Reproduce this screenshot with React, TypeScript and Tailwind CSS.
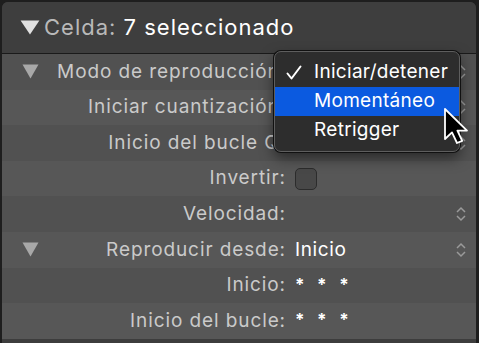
import React from 'react';

const font = { fontFamily: 'Inter, "Liberation Sans", Arial, sans-serif' };

const Chevrons = () => (
  <svg width="12" height="18" viewBox="0 0 12 18" className="shrink-0">
    <path d="M2 7 L6 3 L10 7 M2 11 L6 15 L10 11" stroke="#9a9a9a" strokeWidth="1.5" fill="none" />
  </svg>
);

const Tri = ({ color, w = 17 }: { color: string; w?: number }) => (
  <svg width={w} height="15" viewBox="0 0 17 15" preserveAspectRatio="none">
    <path d="M0.5 0.5 H16.5 L8.5 14.5 Z" fill={color} />
  </svg>
);

interface RowProps {
  label: string;
  light?: boolean;
  disclosure?: boolean;
  value?: React.ReactNode;
  stepper?: boolean;
}

const Row: React.FC<RowProps> = ({ label, light, disclosure, value, stepper }) => (
  <div className={`flex h-[35.6px] items-center ${light ? 'bg-[#575757]' : 'bg-[#515151]'}`}>
    <div className="w-[48px] pl-[20px] shrink-0">{disclosure && <Tri color="#a8a8a8" />}</div>
    <div className="w-[236px] text-right text-[19px] tracking-[0.9px] text-[#cacaca] whitespace-nowrap overflow-hidden">
      {label}
    </div>
    <div className="flex flex-1 items-center pl-[9px] pr-[9px]">
      <div className="flex-1 text-[19px] tracking-[0.6px] text-white">{value}</div>
      {stepper && <Chevrons />}
    </div>
  </div>
);

const Stars = () => (
  <span className="flex gap-[12px] font-bold text-[17px] text-white">
    <span>*</span>
    <span>*</span>
    <span>*</span>
  </span>
);

const Check = () => (
  <svg width="16" height="16" viewBox="0 0 16 16">
    <path d="M1.5 8.5 L5.5 13.5 L14.5 1.5" stroke="#fff" strokeWidth="2" fill="none" strokeLinecap="round" strokeLinejoin="round" />
  </svg>
);

export default function App() {
  return (
    <div className="w-[479px] h-[343px] bg-[#1e1e1e] overflow-hidden" style={font}>
      <div className="relative ml-[2px] mr-[3px] mt-[2px] h-[341px] rounded-t-[6px] overflow-hidden bg-[#3d3d3d]">
        <div className="flex h-[52px] items-center gap-[4px] pl-[18px] border-b border-[#1a1a1a] bg-[#3e3e3e]">
          <Tri color="#e0e0e0" w={20} />
          <span className="text-[22px] text-[#b9b9b9] tracking-[1px]">
            Celda: <span className="text-white">7 seleccionado</span>
          </span>
        </div>
        <Row label="Modo de reproducción:" disclosure stepper />
        <Row label="Iniciar cuantización:" light stepper />
        <Row label="Inicio del bucle Q:" stepper />
        <Row
          label="Invertir:"
          light
          value={<div className="w-[22px] h-[22px] rounded-[5px] bg-[#484848] border border-[#2c2c2c]" />}
        />
        <Row label="Velocidad:" stepper />
        <Row label="Reproducir desde:" light disclosure stepper value="Inicio" />
        <Row label="Inicio:" value={<Stars />} />
        <Row label="Inicio del bucle:" light value={<Stars />} />

        <div className="absolute left-[272px] top-[49px] w-[186px] rounded-[7px] border border-[#5e5e5e] bg-[#2d2d2d] py-[6px] shadow-[0_0_0_1px_#111,0_6px_14px_rgba(0,0,0,0.5)] text-[19px] tracking-[0.3px] text-white">
          <div className="flex h-[29px] items-center">
            <span className="flex w-[39px] pl-[11px]">
              <Check />
            </span>
            <span>Iniciar/detener</span>
          </div>
          <div className="flex h-[29px] items-center bg-[#0b5ae0]">
            <span className="w-[39px]" />
            <span>Momentáneo</span>
          </div>
          <div className="flex h-[29px] items-center">
            <span className="w-[39px]" />
            <span>Retrigger</span>
          </div>
        </div>

        <svg className="absolute left-[441px] top-[105px]" width="28" height="38" viewBox="0 0 14 19">
          <path d="M1 1 L1 16 L4.5 12.7 L7 18 L9.6 16.9 L7.2 11.8 L12 11.8 Z" fill="#000" stroke="#fff" strokeWidth="0.9" strokeLinejoin="round" />
        </svg>
      </div>
    </div>
  );
}
